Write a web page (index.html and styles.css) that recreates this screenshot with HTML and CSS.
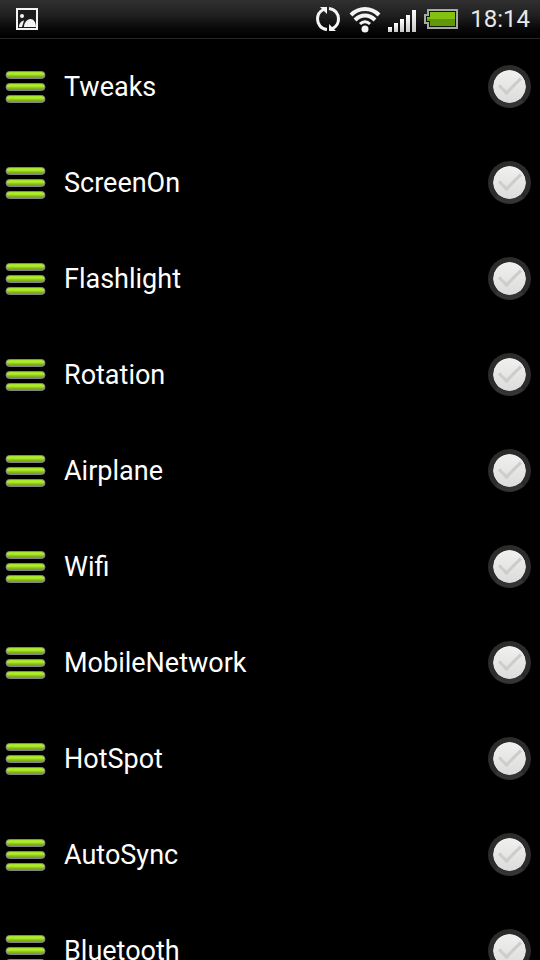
FILE: index.html
```
<!DOCTYPE html>
<html lang="en">
<head>
<meta charset="UTF-8">
<meta name="viewport" content="width=device-width, initial-scale=1">
<title>Quick Settings</title>
<link rel="stylesheet" href="styles.css">
</head>
<body>
    <svg class="defs" aria-hidden="true">
        <defs>
            <linearGradient id="bar" x1="0" y1="0" x2="0" y2="1">
                <stop offset="0" stop-color="#a4dc28"/>
                <stop offset="0.35" stop-color="#b4f02c"/>
                <stop offset="0.6" stop-color="#8cc41c"/>
                <stop offset="1" stop-color="#64980c"/>
            </linearGradient>
            <linearGradient id="signal" x1="0" y1="0" x2="0" y2="1">
                <stop offset="0" stop-color="#ffffff"/>
                <stop offset="1" stop-color="#c8c8c8"/>
            </linearGradient>
            <symbol id="handle" viewBox="0 0 42 34">
                <g fill="url(#bar)" stroke="#84848c">
                    <rect x="1" y="1.5" width="39" height="7" rx="3.5"/>
                    <rect x="1" y="13.5" width="39" height="7" rx="3.5"/>
                    <rect x="1" y="25.5" width="39" height="7" rx="3.5"/>
                </g>
            </symbol>
        </defs>
    </svg>

    <header class="status-bar">
        <svg class="picture-icon" width="22" height="22" viewBox="0 0 22 22">
            <rect x="1" y="1" width="20" height="20" fill="#1c1c1c" stroke="#f4f4f4" stroke-width="2"/>
            <circle cx="6" cy="8" r="2" fill="#f4f4f4"/>
            <path d="M3 19c0-3 2-6 5-6.500L6 19zM8 19c0-4 3-8 6.500-8 3 0 5.500 3 5.500 8z" fill="#f4f4f4"/>
        </svg>
        <div class="status-icons">
            <svg width="26" height="26" viewBox="0 0 26 26">
                <g fill="none" stroke="#f4f4f4" stroke-width="3">
                    <path d="M12 23.500C6 23 2.500 18 2.500 13c0-4 2-7.500 6-9.500"/>
                    <path d="M14 2.500c6 .5 9.500 5.500 9.500 10.500 0 4-2 7.500-6 9.500"/>
                </g>
                <path d="M5 1h7v7zM21 25h-7v-7z" fill="#f4f4f4"/>
            </svg>
            <svg width="32" height="28" viewBox="0 0 32 28">
                <g fill="none" stroke="#f4f4f4" stroke-width="4">
                    <path d="M2 10c8-8 20-8 28 0"/>
                    <path d="M6 15c6-6 14-6 20 0"/>
                    <path d="M11 19c3-3 7-3 10 0" stroke-width="3"/>
                </g>
                <circle cx="16" cy="24" r="3.500" fill="#f4f4f4"/>
            </svg>
            <svg class="signal" width="28" height="24" viewBox="0 0 28 24" fill="url(#signal)">
                <rect x="0" y="19" width="4" height="5"/>
                <rect x="6" y="15" width="4" height="9"/>
                <rect x="12" y="11" width="4" height="13"/>
                <rect x="18" y="7" width="4" height="17"/>
                <rect x="24" y="2" width="4" height="22"/>
            </svg>
            <svg width="34" height="20" viewBox="0 0 34 20">
                <path d="M4 1h29v18H4v-5H1V6h3z" fill="#101808" stroke="#a8a8a8" stroke-width="2"/>
                <path d="M6 3h25v7H3V8h3z" fill="#84c010"/>
                <path d="M3 10h28v7H6v-5H3z" fill="#609808"/>
            </svg>
        </div>
        <time class="clock">18:14</time>
    </header>

    <main>
        <ul class="toggle-list">
            <li class="row">
                <svg class="handle"><use href="#handle"/></svg>
                <label for="tweaks">Tweaks</label>
                <input type="checkbox" id="tweaks">
            </li>
            <li class="row">
                <svg class="handle"><use href="#handle"/></svg>
                <label for="screen-on">ScreenOn</label>
                <input type="checkbox" id="screen-on">
            </li>
            <li class="row">
                <svg class="handle"><use href="#handle"/></svg>
                <label for="flashlight">Flashlight</label>
                <input type="checkbox" id="flashlight">
            </li>
            <li class="row">
                <svg class="handle"><use href="#handle"/></svg>
                <label for="rotation">Rotation</label>
                <input type="checkbox" id="rotation">
            </li>
            <li class="row">
                <svg class="handle"><use href="#handle"/></svg>
                <label for="airplane">Airplane</label>
                <input type="checkbox" id="airplane">
            </li>
            <li class="row">
                <svg class="handle"><use href="#handle"/></svg>
                <label for="wifi">Wifi</label>
                <input type="checkbox" id="wifi">
            </li>
            <li class="row">
                <svg class="handle"><use href="#handle"/></svg>
                <label for="mobile-network">MobileNetwork</label>
                <input type="checkbox" id="mobile-network">
            </li>
            <li class="row">
                <svg class="handle"><use href="#handle"/></svg>
                <label for="hotspot">HotSpot</label>
                <input type="checkbox" id="hotspot">
            </li>
            <li class="row">
                <svg class="handle"><use href="#handle"/></svg>
                <label for="auto-sync">AutoSync</label>
                <input type="checkbox" id="auto-sync">
            </li>
            <li class="row">
                <svg class="handle"><use href="#handle"/></svg>
                <label for="bluetooth">Bluetooth</label>
                <input type="checkbox" id="bluetooth">
            </li>
        </ul>
    </main>
</body>
</html>
```
FILE: styles.css
```
* {
    box-sizing: border-box;
}

body {
    font-family: Roboto, sans-serif;
    background-color: #000;
    color: #fff;
    margin: 0;
    height: 100vh;
    display: flex;
    flex-direction: column;
}

.defs {
    position: absolute;
    width: 0;
    height: 0;
}

.status-bar {
    display: flex;
    align-items: center;
    flex-shrink: 0;
    height: 39px;
    padding: 0 10px 0 16px;
    background: linear-gradient(#303030, #202020 40%, #080808 75%, #000);
    border-bottom: 1px solid #262626;
}

.status-icons {
    display: flex;
    align-items: center;
    gap: 8px;
    margin-left: auto;
}

.status-icons svg {
    display: block;
}

.status-icons .signal {
    margin: 2px 0 0 -1px;
}

.clock {
    font-size: 24px;
    line-height: 28px;
    color: #e8e8e8;
    margin-left: 12px;
}

main {
    flex: 1;
    min-height: 0;
    overflow-y: auto;
    scrollbar-width: none;
}

.toggle-list {
    list-style: none;
    margin: 0;
    padding: 0;
}

.row {
    display: flex;
    align-items: center;
    height: 96px;
    padding: 0 9px 0 5px;
}

.handle {
    width: 42px;
    height: 34px;
    margin-right: 17px;
}

.row label {
    flex: 1;
    font-size: 27px;
    line-height: 32px;
}

.row input {
    appearance: none;
    display: flex;
    align-items: center;
    justify-content: center;
    width: 43px;
    height: 43px;
    margin: 0 0 2px;
    border: 5px solid #2c2c2c;
    border-bottom-color: #343434;
    border-radius: 50%;
    background: linear-gradient(#f0f0ee, #dcdcda) padding-box;
}

.row input::before {
    content: "";
    width: 19px;
    height: 9px;
    border: solid #cdcdcb;
    border-width: 0 0 3px 3px;
    transform: rotate(-45deg);
    margin-bottom: 6px;
}

.row input:checked::before {
    border-color: #6c9c10;
}
```
